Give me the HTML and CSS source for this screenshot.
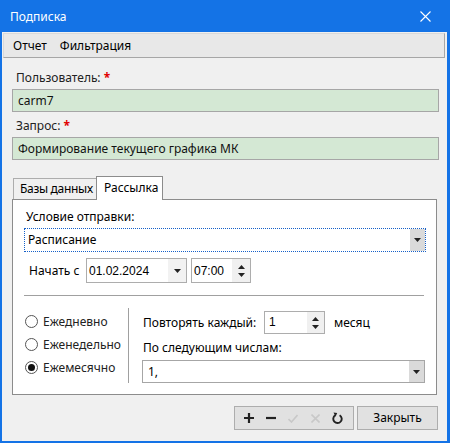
FILE: index.html
```html
<!DOCTYPE html>
<html lang="ru">
<head>
    <meta charset="UTF-8">
    <title>Подписка</title>
    <link rel="stylesheet" href="styles.css">
</head>
<body>
    <div class="window">
        <div class="titlebar">
            <span class="title">Подписка</span>
            <svg class="close" width="11" height="11" viewBox="0 0 11 11"><path d="M0.5 0.5L10.5 10.5M10.5 0.5L0.5 10.5" stroke="#fff" stroke-width="1.1"/></svg>
        </div>
        <div class="client">
            <div class="menubar">
                <span>Отчет</span>
                <span>Фильтрация</span>
            </div>
            <div class="content">
                <div class="label">Пользователь: <span class="req">*</span></div>
                <div class="field">carm7</div>
                <div class="label second">Запрос: <span class="req">*</span></div>
                <div class="field">Формирование текущего графика МК</div>

                <div class="tabs">
                    <div class="tab">Базы данных</div>
                    <div class="tab active">Рассылка</div>
                </div>
                <div class="panel">
                    <div class="plabel">Условие отправки:</div>
                    <div class="combo focus">
                        <span class="value">Расписание</span>
                        <span class="drop"><svg width="7" height="4" viewBox="0 0 7 4"><path d="M0 0h7L3.5 4z" fill="#222"/></svg></span>
                    </div>
                    <div class="start-row">
                        <span class="start-label">Начать с</span>
                        <div class="date">
                            <span class="value">01.02.2024</span>
                            <span class="date-drop"><svg width="7" height="4" viewBox="0 0 7 4"><path d="M0 0h7L3.5 4z" fill="#222"/></svg></span>
                        </div>
                        <div class="time">
                            <span class="value">07:00</span>
                            <span class="spin">
                                <svg width="7" height="4" viewBox="0 0 7 4"><path d="M0 4h7L3.5 0z" fill="#222"/></svg>
                                <svg width="7" height="4" viewBox="0 0 7 4"><path d="M0 0h7L3.5 4z" fill="#222"/></svg>
                            </span>
                        </div>
                    </div>
                    <div class="sep"></div>
                    <div class="schedule">
                        <div class="radios">
                            <div class="radio"><span class="circle"></span>Ежедневно</div>
                            <div class="radio"><span class="circle"></span>Еженедельно</div>
                            <div class="radio"><span class="circle checked"></span>Ежемесячно</div>
                        </div>
                        <div class="vdiv"></div>
                        <div class="repeat">
                            <div class="repeat-row">
                                <span class="repeat-label">Повторять каждый:</span>
                                <div class="num">
                                    <span class="value">1</span>
                                    <span class="spin">
                                        <svg width="7" height="4" viewBox="0 0 7 4"><path d="M0 4h7L3.5 0z" fill="#222"/></svg>
                                        <svg width="7" height="4" viewBox="0 0 7 4"><path d="M0 0h7L3.5 4z" fill="#222"/></svg>
                                    </span>
                                </div>
                                <span class="unit">месяц</span>
                            </div>
                            <div class="days-label">По следующим числам:</div>
                            <div class="combo days">
                                <span class="value">1,</span>
                                <span class="drop"><svg width="7" height="4" viewBox="0 0 7 4"><path d="M0 0h7L3.5 4z" fill="#222"/></svg></span>
                            </div>
                        </div>
                    </div>
                </div>

                <div class="footer">
                    <div class="toolbar">
                        <span class="tool"><svg width="10" height="10" viewBox="0 0 10 10"><path d="M5 0v10M0 5h10" stroke="#222" stroke-width="2.2"/></svg></span>
                        <span class="tool"><svg width="10" height="10" viewBox="0 0 10 10"><path d="M0 5h10" stroke="#222" stroke-width="2.2"/></svg></span>
                        <span class="tool"><svg width="10" height="9" viewBox="0 0 10 9"><path d="M0.5 5L3.5 8L9.5 1" fill="none" stroke="#c8c8c8" stroke-width="1.6"/></svg></span>
                        <span class="tool"><svg width="9" height="9" viewBox="0 0 9 9"><path d="M0.5 0.5L8.5 8.5M8.5 0.5L0.5 8.5" stroke="#c8c8c8" stroke-width="1.6"/></svg></span>
                        <span class="tool"><svg width="11" height="12" viewBox="0 0 11 12"><path d="M7.6 3.2A4.2 4.2 0 1 1 3.2 3.3" fill="none" stroke="#222" stroke-width="1.9"/><path d="M1.5 0.5L5.2 0.9L3.6 4.8z" fill="#222"/></svg></span>
                    </div>
                    <div class="btn">Закрыть</div>
                </div>
            </div>
        </div>
    </div>
</body>
</html>
```

FILE: styles.css
```css
body {
    margin: 0;
    font-family: "Noto Sans", "Open Sans", sans-serif;
    font-size: 12px;
    color: #000;
    background-color: #1473e6;
}
.window {
    width: 450px;
    height: 443px;
    display: flex;
    flex-direction: column;
}
.titlebar {
    height: 32px;
    display: flex;
    align-items: center;
    justify-content: space-between;
    padding: 0 19px 0 10px;
    color: #fff;
    font-size: 12px;
}
.client {
    flex: 1;
    margin: 0 3px 2px 2px;
    background-color: #f0f0f0;
    display: flex;
    flex-direction: column;
}
.menubar {
    margin: 1px 2px 0 1px;
    height: 25px;
    box-sizing: border-box;
    background-color: #e8e8e8;
    border: 1px solid #d9d9d9;
    border-right-color: #a6a6a6;
    border-bottom-color: #a6a6a6;
    display: flex;
    align-items: center;
    padding-left: 9px;
    gap: 13px;
}
.content {
    padding: 0 8px 0 10px;
}
.label {
    margin-top: 12px;
    height: 16px;
    line-height: 16px;
    padding-left: 4px;
    color: #222;
}
.label.second {
    margin-top: 6px;
}
.req {
    color: #e00000;
    font-weight: bold;
}
.field {
    margin-top: 3px;
    height: 23px;
    box-sizing: border-box;
    border: 1px solid #a6a6a6;
    background-color: #d4e8d4;
    padding-left: 5px;
    line-height: 21px;
    color: #111;
}
.tabs {
    margin-top: 16px;
    height: 23px;
    display: flex;
    align-items: flex-end;
    padding-left: 1px;
}
.tab {
    height: 21px;
    box-sizing: border-box;
    border: 1px solid #adadad;
    border-bottom: none;
    border-right: none;
    background-color: #f0f0f0;
    padding: 0 0 0 6px;
    line-height: 20px;
    width: 83px;
    white-space: nowrap;
    letter-spacing: -0.3px;
}
.tab.active {
    position: relative;
    z-index: 1;
    height: 24px;
    margin-bottom: -1px;
    width: 67px;
    background-color: #fff;
    border-color: #8c8c8c;
    border-right: 1px solid #8c8c8c;
    padding-left: 7px;
    line-height: 22px;
    letter-spacing: 0;
}
.panel {
    height: 196px;
    box-sizing: border-box;
    margin-right: 2px;
    border: 1px solid #8c8c8c;
    background-color: #fff;
    padding: 9px 10px 0 11px;
}
.plabel {
    height: 16px;
    line-height: 16px;
    padding-left: 2px;
}
.combo {
    margin-top: 3px;
    height: 24px;
    box-sizing: border-box;
    border: 1px solid #a6a6a6;
    display: flex;
    align-items: stretch;
}
.combo.focus {
    border: 1px dotted #1660c8;
}
.combo .value {
    flex: 1;
    padding-left: 3px;
    line-height: 21px;
}
.drop {
    width: 15px;
    background-color: #dadada;
    display: flex;
    align-items: center;
    justify-content: center;
}
.start-row {
    margin-top: 6px;
    height: 25px;
    display: flex;
    align-items: center;
}
.start-label {
    margin-left: 5px;
    width: 57px;
}
.date,
.time,
.num {
    height: 25px;
    box-sizing: border-box;
    border: 1px solid #adadad;
    display: flex;
    align-items: stretch;
    font-family: "Liberation Sans", Arial, sans-serif;
}
.date {
    width: 101px;
}
.date .value,
.time .value,
.num .value {
    flex: 1;
    padding-left: 2px;
    line-height: 25px;
}
.date-drop {
    width: 18px;
    background-color: #f2f2f2;
    display: flex;
    align-items: center;
    justify-content: center;
}
.time {
    margin-left: 4px;
    width: 60px;
}
.spin {
    width: 18px;
    background-color: #f0f0f0;
    display: flex;
    flex-direction: column;
    align-items: center;
    justify-content: center;
    gap: 4px;
}
.sep {
    margin-top: 12px;
    height: 1px;
    background-color: #a0a0a0;
    width: 400px;
}
.schedule {
    margin-top: 12px;
    display: flex;
}
.radios {
    width: 103px;
    padding-top: 2px;
    padding-left: 1px;
}
.radio {
    height: 23px;
    display: flex;
    align-items: center;
    color: #222;
}
.circle {
    width: 13px;
    height: 13px;
    box-sizing: border-box;
    border: 1px solid #555;
    border-radius: 50%;
    background-color: #fff;
    margin-right: 5px;
    display: flex;
    align-items: center;
    justify-content: center;
}
.circle.checked::after {
    content: "";
    width: 7px;
    height: 7px;
    border-radius: 50%;
    background-color: #111;
}
.vdiv {
    width: 1px;
    height: 75px;
    background-color: #a0a0a0;
}
.repeat {
    margin-left: 13px;
    width: 283px;
    padding-top: 3px;
}
.repeat-row {
    height: 23px;
    display: flex;
    align-items: center;
}
.repeat-label {
    width: 121px;
    padding-left: 1px;
}
.num {
    width: 61px;
    height: 23px;
}
.num .value {
    line-height: 21px;
    padding-left: 4px;
}
.num .spin {
    width: 17px;
}
.unit {
    margin-left: 9px;
}
.days-label {
    margin-top: 6px;
    height: 16px;
    line-height: 16px;
    padding-left: 1px;
}
.combo.days {
    margin-top: 4px;
    height: 23px;
}
.combo.days .value {
    padding-left: 5px;
}
.footer {
    margin-top: 11px;
    display: flex;
    justify-content: flex-end;
    gap: 3px;
    padding-right: 1px;
}
.toolbar {
    width: 120px;
    height: 24px;
    box-sizing: border-box;
    border: 1px solid #adadad;
    background-color: #e1e1e1;
    display: flex;
    align-items: center;
    padding-left: 3px;
}
.tool {
    width: 22px;
    display: flex;
    justify-content: center;
}
.btn {
    width: 81px;
    height: 24px;
    box-sizing: border-box;
    border: 1px solid #adadad;
    background-color: #e1e1e1;
    text-align: center;
    line-height: 22px;
}
```
